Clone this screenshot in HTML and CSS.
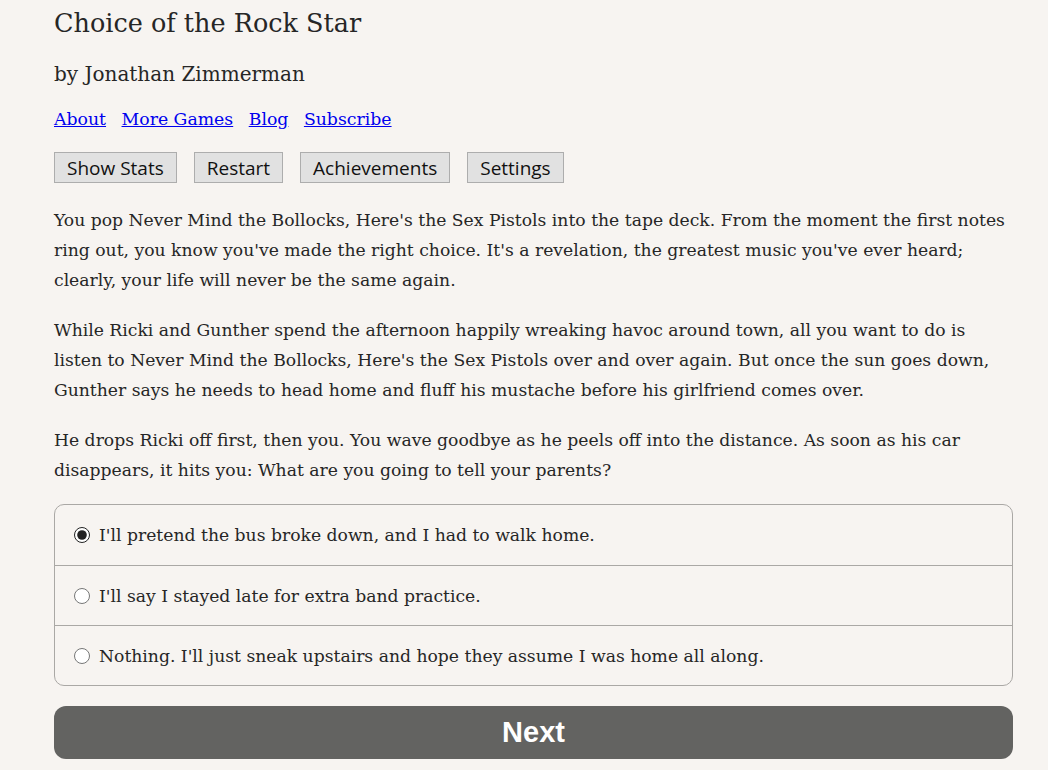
FILE: index.html
```html
<!DOCTYPE html>
<html lang="en">
<head>
  <meta charset="UTF-8" />
  <title>Choice of the Rock Star</title>
  <link rel="stylesheet" href="styles.css">
</head>
<body>
  <div class="container">
    <h1 class="title">Choice of the Rock Star</h1>
    <h2 class="author">by Jonathan Zimmerman</h2>

    <div class="links">
      <a href="#">About</a>
      <a href="#">More Games</a>
      <a href="#">Blog</a>
      <a href="#">Subscribe</a>
    </div>

    <div class="buttons">
      <button class="spacedLink">Show Stats</button>
      <button class="spacedLink">Restart</button>
      <button class="spacedLink">Achievements</button>
      <button class="spacedLink">Settings</button>
    </div>

    <div class="text">
      <p>You pop Never Mind the Bollocks, Here's the Sex Pistols into the tape deck. From the moment the first notes ring out, you know you've made the right choice. It's a revelation, the greatest music you've ever heard; clearly, your life will never be the same again.</p>
      <p>While Ricki and Gunther spend the afternoon happily wreaking havoc around town, all you want to do is listen to Never Mind the Bollocks, Here's the Sex Pistols over and over again. But once the sun goes down, Gunther says he needs to head home and fluff his mustache before his girlfriend comes over.</p>
      <p>He drops Ricki off first, then you. You wave goodbye as he peels off into the distance. As soon as his car disappears, it hits you: What are you going to tell your parents?</p>
    </div>

    <form class="choices">
      <label class="choice">
        <input type="radio" name="choice" checked>
        <span>I'll pretend the bus broke down, and I had to walk home.</span>
      </label>
      <label class="choice">
        <input type="radio" name="choice">
        <span>I'll say I stayed late for extra band practice.</span>
      </label>
      <label class="choice">
        <input type="radio" name="choice">
        <span>Nothing. I'll just sneak upstairs and hope they assume I was home all along.</span>
      </label>
    </form>

    <button class="next">Next</button>
  </div>
</body>
</html>
```

FILE: styles.css
```css
* {
  box-sizing: border-box;
}

body {
  margin: 0;
  background-color: #f7f4f1;
  color: #262626;
  font-family: "DejaVu Serif", Georgia, serif;
  font-size: 17.2px;
  overflow: hidden;
}

.container {
  width: 959px;
  margin-left: 54px;
}

.title {
  margin: 0;
  padding-top: 6px;
  font-size: 25.5px;
  font-weight: normal;
  line-height: 34px;
}

.author {
  margin: 21px 0 0;
  font-size: 20px;
  font-weight: normal;
  line-height: 26px;
}

.links {
  margin-top: 19px;
  display: flex;
  gap: 15.5px;
  line-height: 26px;
  font-size: 17.3px;
}

.links a {
  color: #0000ee;
}

.buttons {
  margin-top: 20px;
  display: flex;
  gap: 17px;
}

.buttons button {
  height: 31px;
  padding: 0 12px;
  background: #e1e1e1;
  border: 1px solid #adadad;
  border-radius: 0;
  color: #111;
  font-family: "Open Sans", "Liberation Sans", sans-serif;
  font-size: 19px;
}

.text {
  margin-top: 22px;
}

.text p {
  margin: 0 0 20px;
  line-height: 30px;
}

.choices {
  margin: -1px 0 0;
  border: 1px solid #aaa8a5;
  border-radius: 10px;
}

.choice {
  display: flex;
  align-items: center;
  height: 60px;
  padding-left: 20px;
  border-top: 1px solid #aaa8a5;
}

.choice:first-child {
  border-top: none;
}

.choice input {
  width: 16px;
  height: 16px;
  margin: 0 9px 0 -1px;
  accent-color: #222;
}

.next {
  display: block;
  width: 100%;
  height: 53px;
  margin-top: 20px;
  border: none;
  border-radius: 12px;
  background: #636361;
  color: #fff;
  font-family: "Liberation Sans", Arial, sans-serif;
  font-weight: bold;
  font-size: 29px;
}
```
